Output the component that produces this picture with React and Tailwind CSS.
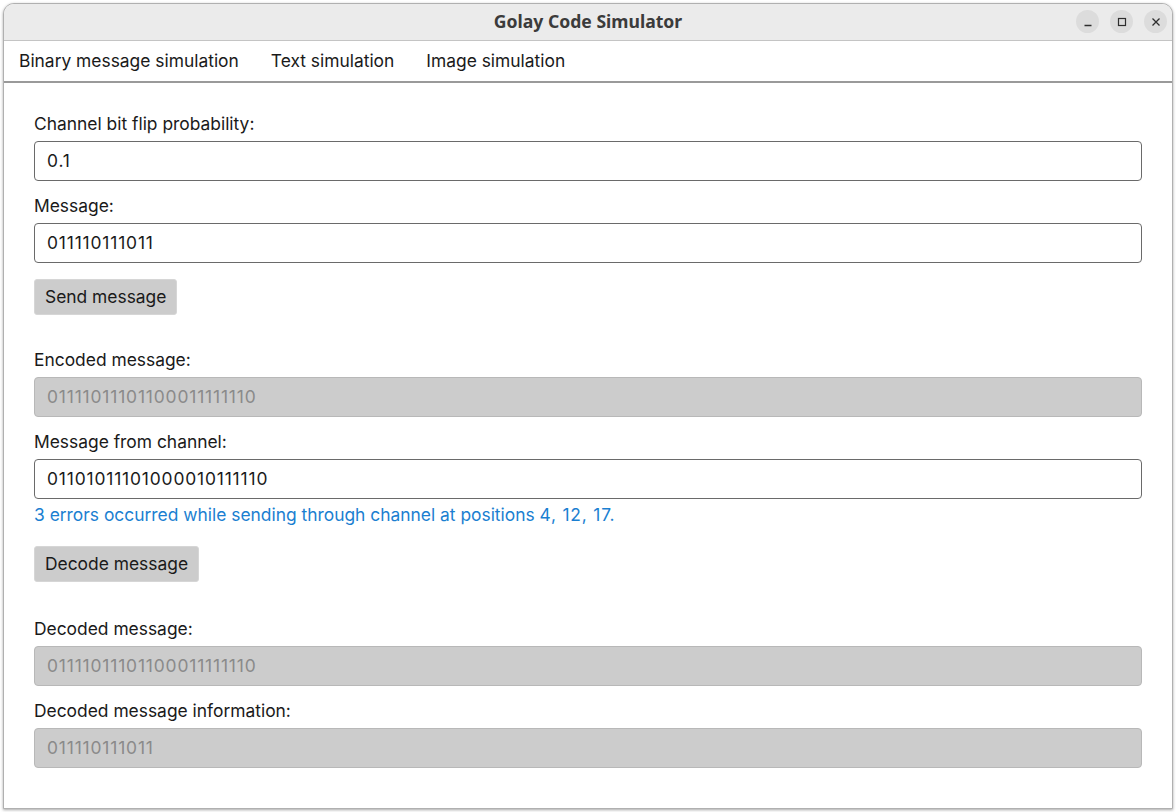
import React from "react";

const fields = {
  probability: "0.1",
  message: "011110111011",
  encoded: "01111011101100011111110",
  fromChannel: "01101011101000010111110",
  decoded: "01111011101100011111110",
  info: "011110111011",
};

function Label({ children, className = "" }) {
  return <div className={"h-6 leading-6 text-[17.4px] text-[#1a1a1a] " + className}>{children}</div>;
}

function Field({ value, disabled }) {
  return (
    <div
      className={
        "mt-[5px] h-10 rounded-[4px] border px-3 flex items-center text-[17.4px] tracking-[0.85px] " +
        (disabled
          ? "bg-[#cccccc] border-[#b8b8b8] text-[#8a8a8a]"
          : "bg-white border-[#6a6a6a] text-[#1a1a1a]")
      }
    >
      {value}
    </div>
  );
}

function ActionButton({ children, className = "" }) {
  return (
    <button
      className={
        "h-9 px-[10px] rounded-[3px] bg-[#cccccc] border border-[#d6d6d6] text-[17.4px] text-[#1a1a1a] " +
        className
      }
    >
      {children}
    </button>
  );
}

function TitleButton({ children }) {
  return (
    <div className="w-[23px] h-[23px] rounded-full bg-[#dcdcdc] flex items-center justify-center">
      {children}
    </div>
  );
}

export default function App() {
  return (
    <div className="w-[1176px] h-[812px] bg-white p-[3px]" style={{ fontFamily: "Inter, 'Noto Sans', sans-serif" }}>
      <div className="h-full flex flex-col rounded-t-[11px] border border-[#b0b0b0] shadow-[0_1px_3px_rgba(0,0,0,0.35)] overflow-hidden bg-white">
        {/* Title bar */}
        <div className="h-[37px] shrink-0 bg-[#ebebeb] border-b border-[#c4c4c4] relative flex items-center justify-center">
          <span
            className="text-[17.6px] font-bold text-[#3b3b3b] -mt-[2px]"
            style={{ fontFamily: "'Noto Sans', 'Open Sans', sans-serif" }}
          >
            Golay Code Simulator
          </span>
          <div className="absolute right-[5px] top-[6px] flex gap-[11px]">
            <TitleButton>
              <svg width="10" height="10" viewBox="0 0 10 10">
                <path d="M1.5 8.5h7" stroke="#2e2e2e" strokeWidth="1.3" />
              </svg>
            </TitleButton>
            <TitleButton>
              <svg width="10" height="10" viewBox="0 0 10 10">
                <rect x="1.5" y="1.5" width="7" height="7" fill="none" stroke="#2e2e2e" strokeWidth="1.2" />
              </svg>
            </TitleButton>
            <TitleButton>
              <svg width="10" height="10" viewBox="0 0 10 10">
                <path d="M1.5 1.5l7 7M8.5 1.5l-7 7" stroke="#2e2e2e" strokeWidth="1.3" />
              </svg>
            </TitleButton>
          </div>
        </div>

        {/* Menu bar */}
        <div className="h-[42px] shrink-0 border-b-2 border-[#9a9a9a] flex items-center pl-[15px] gap-8 text-[17.4px] text-[#1a1a1a]">
          <span>Binary message simulation</span>
          <span>Text simulation</span>
          <span>Image simulation</span>
        </div>

        {/* Content */}
        <div className="flex-1 px-[30px] pt-[29px]">
          <Label>Channel bit flip probability:</Label>
          <Field value={fields.probability} />

          <Label className="mt-[13px]">Message:</Label>
          <Field value={fields.message} />

          <ActionButton className="mt-4">Send message</ActionButton>

          <Label className="mt-[33px]">Encoded message:</Label>
          <Field value={fields.encoded} disabled />

          <Label className="mt-[13px]">Message from channel:</Label>
          <Field value={fields.fromChannel} />
          <div className="h-6 leading-6 mt-1 text-[17.4px] text-[#1b7fd1]">
            3 errors occurred while sending through channel at positions{" "}
            <span className="tracking-[0.8px]">4, 12, 17.</span>
          </div>

          <ActionButton className="mt-[19px]">Decode message</ActionButton>

          <Label className="mt-[35px]">Decoded message:</Label>
          <Field value={fields.decoded} disabled />

          <Label className="mt-[13px]">Decoded message information:</Label>
          <Field value={fields.info} disabled />
        </div>
      </div>
    </div>
  );
}
